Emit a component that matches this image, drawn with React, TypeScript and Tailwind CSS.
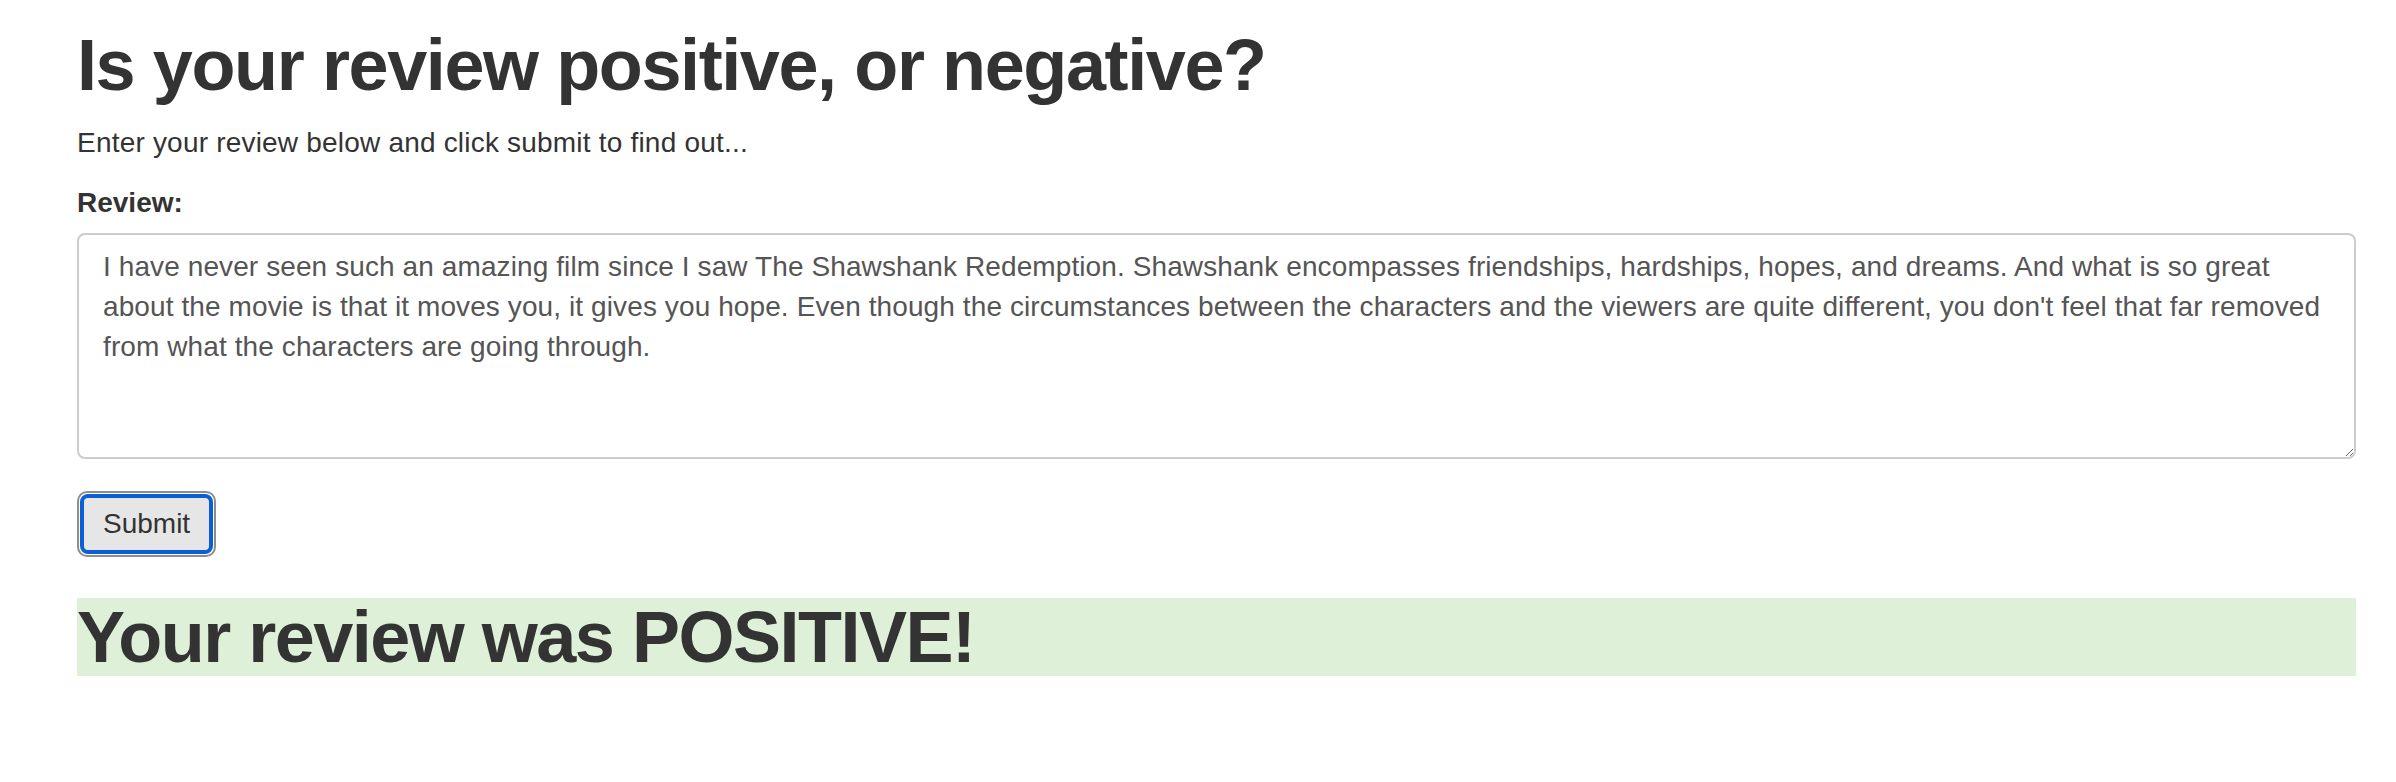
import React from "react";

const review =
    "I have never seen such an amazing film since I saw The Shawshank Redemption. Shawshank encompasses friendships, hardships, hopes, and dreams. And what is so great\nabout the movie is that it moves you, it gives you hope. Even though the circumstances between the characters and the viewers are quite different, you don't feel that far removed\nfrom what the characters are going through.";

const App: React.FC = () => {
    return (
        <div className="min-h-screen bg-white pl-[77px] pr-[40px] pt-[26px] font-['Liberation_Sans',Arial,sans-serif] text-[#333]">
            <h1 className="text-[72px] font-bold leading-[1.1] tracking-[-1.4px]">
                Is your review positive, or negative?
            </h1>
            <p className="mt-[18px] text-[28px] leading-[40px] tracking-[0.2px]">
                Enter your review below and click submit to find out...
            </p>
            <form className="mt-[20px]" onSubmit={(e) => e.preventDefault()}>
                <label className="block text-[28px] font-bold leading-[40px]">
                    Review:
                </label>
                <textarea
                    className="mt-[10px] block h-[226px] w-full rounded-[8px] border-2 border-[#cccccc] px-[24px] py-[12px] text-[28px] leading-[40px] tracking-[0.1px] text-[#555] outline-none"
                    defaultValue={review}
                />
                <button
                    type="submit"
                    className="mt-[32px] block rounded-[10px] border-2 border-[#8e8e8e] bg-white p-px"
                >
                    <span className="block rounded-[8px] border-4 border-[#0a5fd6] bg-[#e6e6e6] px-[19px] py-[6px] text-[28px] leading-[40px] text-[#333]">
                        Submit
                    </span>
                </button>
            </form>
            <div className="mt-[41px] bg-[#dff0d8]">
                <h1 className="text-[72px] font-bold leading-[78px] tracking-[-1.5px]">
                    Your review was POSITIVE!
                </h1>
            </div>
        </div>
    );
};

export default App;
